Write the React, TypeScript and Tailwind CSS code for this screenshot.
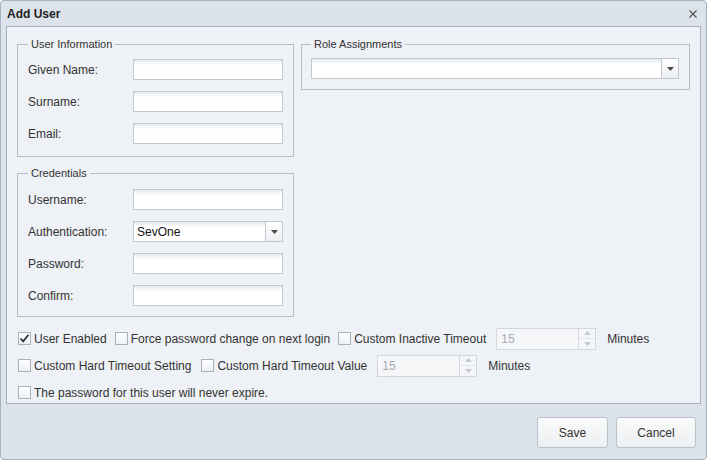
import React from "react";

const font = "font-['Liberation_Sans',Arial,sans-serif]";

function TextInput() {
  return (
    <div className="w-[150px] h-[21px] border border-[#c2c7d0] bg-[linear-gradient(to_bottom,#e6e8eb,#ffffff_5px)]" />
  );
}

function Arrow() {
  return (
    <svg width="7" height="4" viewBox="0 0 7 4">
      <path d="M0 0H7L3.5 4Z" fill="#4a4a4a" />
    </svg>
  );
}

function SelectBox({ value, width }: { value?: string; width: string }) {
  return (
    <div
      className={`${width} h-[21px] border border-[#c2c7d0] bg-[linear-gradient(to_bottom,#e6e8eb,#ffffff_5px)] flex items-stretch`}
    >
      <div className="flex-1 flex items-center pl-[3px] text-[12px] text-[#111]">{value}</div>
      <div className="w-[17px] border-l border-[#c2c7d0] bg-[linear-gradient(to_bottom,#ffffff,#eceef1)] flex items-center justify-center">
        <Arrow />
      </div>
    </div>
  );
}

function Field({ label, children }: { label: string; children: React.ReactNode }) {
  return (
    <div className="flex items-center justify-between h-[21px]">
      <span className="text-[12px] text-[#333]">{label}</span>
      {children}
    </div>
  );
}

function Checkbox({ checked, label, tight }: { checked?: boolean; label: string; tight?: boolean }) {
  return (
    <div className={`flex items-center gap-[3px] ${tight ? "mr-[8px]" : "mr-[10px]"}`}>
      <div className="w-[13px] h-[13px] border border-[#aab0ba] bg-[linear-gradient(to_bottom,#ffffff,#eef0f3)] flex items-center justify-center">
        {checked && (
          <svg width="11" height="11" viewBox="0 0 11 11">
            <path d="M1.5 5.5L4.2 8.3L9.5 1.8" fill="none" stroke="#333" strokeWidth="1.8" />
          </svg>
        )}
      </div>
      <span className="text-[12px] text-[#333] whitespace-nowrap">{label}</span>
    </div>
  );
}

function Spinner() {
  return (
    <div className="w-[100px] h-[22px] border border-[#d3d7dd] bg-[#f4f6f8] flex items-stretch">
      <div className="flex-1 flex items-center pl-[4px] text-[12px] text-[#a8abb0]">15</div>
      <div className="w-[17px] border-l border-[#d3d7dd] flex flex-col">
        <div className="flex-1 flex items-center justify-center border-b border-[#e2e5e9]">
          <svg width="7" height="4" viewBox="0 0 7 4">
            <path d="M0 4H7L3.5 0Z" fill="#c4c8ce" />
          </svg>
        </div>
        <div className="flex-1 flex items-center justify-center">
          <svg width="7" height="4" viewBox="0 0 7 4">
            <path d="M0 0H7L3.5 4Z" fill="#c4c8ce" />
          </svg>
        </div>
      </div>
    </div>
  );
}

function Button({ label, width }: { label: string; width: string }) {
  return (
    <div
      className={`${width} h-[31px] rounded-[3px] border border-[#b9c0ca] bg-[linear-gradient(to_bottom,#fbfbfb,#eceef0)] flex items-center justify-center text-[12px] text-[#333]`}
    >
      {label}
    </div>
  );
}

export default function App() {
  return (
    <div className={`w-[707px] h-[460px] bg-white ${font}`}>
      <div className="w-full h-full border border-[#a7b1bf] rounded-[4px] bg-[#dde3ea] flex flex-col">
        <div className="h-[25px] flex items-center justify-between pl-[6px] pr-[9px]">
          <span className="text-[12px] font-bold text-[#222]">Add User</span>
          <svg width="8" height="8" viewBox="0 0 8 8">
            <path d="M0.5 0.5L7.5 7.5M7.5 0.5L0.5 7.5" stroke="#555" strokeWidth="1.2" />
          </svg>
        </div>
        <div className="mx-[5px] h-[378px] border border-[#a7b1bf] bg-[#eef1f5] pl-[10px] pr-[10px] pt-[11px] flex flex-col">
          <div className="flex gap-[7px] items-start">
            <div className="w-[277px] flex flex-col gap-[10px]">
              <fieldset className="border border-[#b6bdc8] px-[10px] pt-[8px] pb-[12px]">
                <legend className="text-[11px] text-[#333] px-[3px] leading-[13px]">User Information</legend>
                <div className="flex flex-col gap-[11px]">
                  <Field label="Given Name:"><TextInput /></Field>
                  <Field label="Surname:"><TextInput /></Field>
                  <Field label="Email:"><TextInput /></Field>
                </div>
              </fieldset>
              <fieldset className="border border-[#b6bdc8] px-[10px] pt-[9px] pb-[10px]">
                <legend className="text-[11px] text-[#333] px-[3px] leading-[13px]">Credentials</legend>
                <div className="flex flex-col gap-[11px]">
                  <Field label="Username:"><TextInput /></Field>
                  <Field label="Authentication:"><SelectBox value="SevOne" width="w-[150px]" /></Field>
                  <Field label="Password:"><TextInput /></Field>
                  <Field label="Confirm:"><TextInput /></Field>
                </div>
              </fieldset>
            </div>
            <fieldset className="flex-1 border border-[#b6bdc8] pl-[9px] pr-[10px] pt-[7px] pb-[10px]">
              <legend className="text-[11px] text-[#333] px-[3px] leading-[13px]">Role Assignments</legend>
              <SelectBox width="w-full" />
            </fieldset>
          </div>
          <div className="mt-[8px] flex flex-col">
            <div className="h-[27px] flex items-center pl-[1px]">
              <Checkbox checked tight label="User Enabled" />
              <Checkbox tight label="Force password change on next login" />
              <Checkbox label="Custom Inactive Timeout" />
              <Spinner />
              <span className="ml-[11px] text-[12px] text-[#333]">Minutes</span>
            </div>
            <div className="h-[27px] flex items-center pl-[1px]">
              <Checkbox label="Custom Hard Timeout Setting" />
              <Checkbox label="Custom Hard Timeout Value" />
              <Spinner />
              <span className="ml-[11px] text-[12px] text-[#333]">Minutes</span>
            </div>
            <div className="h-[27px] flex items-center pl-[1px]">
              <Checkbox label="The password for this user will never expire." />
            </div>
          </div>
        </div>
        <div className="flex-1 flex justify-end items-start pt-[13px] pr-[10px] gap-[8px]">
          <Button label="Save" width="w-[71px]" />
          <Button label="Cancel" width="w-[80px]" />
        </div>
      </div>
    </div>
  );
}
